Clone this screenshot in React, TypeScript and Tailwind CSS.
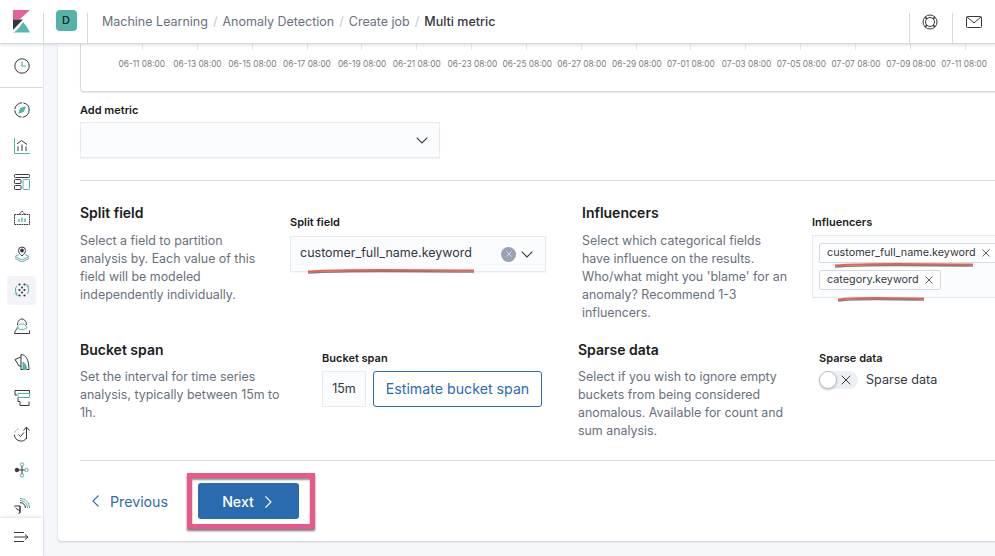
import React from "react";

const T = "#54b3a8";
const D = "#343741";

function Ic({ children }: { children: React.ReactNode }) {
  return (
    <svg width="16" height="16" viewBox="0 0 16 16" fill="none" stroke={D} strokeWidth="1">
      {children}
    </svg>
  );
}

const icons: React.ReactNode[] = [
  <Ic key="compass"><circle cx="8" cy="8" r="7.200" strokeDasharray="10.500 1.200" /><path d="M4.800 11.200L6.500 6.500 11.200 4.800 9.500 9.500z" fill={T} stroke={T} /></Ic>,
  <Ic key="viz"><path d="M.5 0v15.500h15.500" stroke={T} /><path d="M3 6l4.500-3.500L13 6.500" /><path d="M4 13V8.500M8 13V6.500M12 13V8.500" /></Ic>,
  <Ic key="dash"><rect x=".5" y=".5" width="15" height="3" rx=".8" /><rect x=".5" y="5.500" width="6.500" height="4" rx=".8" /><rect x=".5" y="11.500" width="6.500" height="4" rx=".8" /><rect x="9" y="5.500" width="6.500" height="10" rx=".8" stroke={T} /></Ic>,
  <Ic key="canvas"><path d="M.5 4.500h15v10H.5zM5 4.500L8 1l3 3.500" strokeDasharray="1.800 .6" /><path d="M5 12V9M8 12V7.500M11 12V8.500" stroke={T} strokeWidth="1.400" /></Ic>,
  <Ic key="maps"><path d="M8 10C5.800 8 4.500 6.500 4.500 4.500a3.500 3.500 0 017 0C11.500 6.500 10.200 8 8 10z" /><circle cx="8" cy="4.500" r="1.500" fill={D} /><path d="M5 8.500L1 10.500 8 14l7-3.500-4-2M1 12.500L8 16l7-3.500" stroke={T} /></Ic>,
  <Ic key="ml"><g fill={D} stroke="none"><circle cx="5.500" cy="2.500" r="1.100" /><circle cx="10.500" cy="2.500" r="1.100" /><circle cx="5.500" cy="8" r="1.100" /><circle cx="8" cy="5.500" r="1" /><circle cx="8" cy="10.500" r="1" /><circle cx="10.500" cy="8" r="1.100" /><circle cx="5.500" cy="13.500" r="1.100" /><circle cx="10.500" cy="13.500" r="1.100" /></g><path d="M2.800 4C.8 6.500.8 9.500 2.800 12M.8 11.800h2.200v2.200M13.200 12c2-2.500 2-5.500 0-8M15.200 4.200H13V2" stroke={T} /></Ic>,
  <Ic key="infra"><path d="M3.500 7C3.500 3.500 5.500 1 8 1s4.500 2.500 4.500 6" /><path d="M4 9.500C2.500 11 1 13 .5 15.500h15V12.500" /><path d="M3 9.500C4.500 6.500 6 6 8 6s3.500.5 5 3.500c-1.500 1.500-3 2-5 2s-3.500-.5-5-2z" stroke={T} /></Ic>,
  <Ic key="apm"><path d="M7 3L1 5.500l4 6.500h2" /><path d="M7 .5c4.800 0 8 5.500 8 15H7z" /><path d="M9 8c2 1 3.500 3.500 3.500 7.500H9z" fill={T} stroke={T} /></Ic>,
  <Ic key="uptime"><path d="M1 .5h14.500v2.500M1 .5V5h2" /><path d="M4 3.500h11.500v4H4z" stroke={T} /><path d="M4 8v3.500h2v4h9v-4" /></Ic>,
  <Ic key="siem"><path d="M12.500 13V1.500M9.500 4.500l3-3.500 3 3.500" /><path d="M12.500 12a6.500 6.500 0 01-12-3.500" /><path d="M.8 6.500A6.500 6.500 0 015 2.500" stroke={T} strokeDasharray="2 1.200" /><path d="M4.500 8.500l2 2 3.500-4" /></Ic>,
  <Ic key="graph"><circle cx="8" cy="2.500" r="1.700" stroke={T} /><circle cx="3" cy="8" r="1.800" fill={D} /><circle cx="12.500" cy="8" r="1.700" stroke={T} /><circle cx="8" cy="13.500" r="1.700" stroke={T} /><path d="M4.700 8h6M8 4.200v7.600" /></Ic>,
  <Ic key="mon"><path d="M6 8H1.200A4.800 4.800 0 106 13z" /><path d="M6 8V15M1.500 10l4.500 3" /><path d="M6 4.500c3 0 5.500 2.500 5.500 5.500" /><path d="M6 2.500c4.500 0 7.500 3.500 7.500 7.500M6 .5c5.500 0 9.500 4 9.500 9.500" stroke={T} /></Ic>,
];

const ticks = ["06-11","06-13","06-15","06-17","06-19","06-21","06-23","06-25","06-27","06-29","07-01","07-03","07-05","07-07","07-09","07-11"];

function Chevron({ className }: { className?: string }) {
  return (
    <svg className={className} width="12" height="7" viewBox="0 0 12 7" fill="none" stroke="#343741" strokeWidth="1.100">
      <path d="M.7.700L6 6l5.300-5.300" />
    </svg>
  );
}

function X({ size = 8, color = "#343741" }: { size?: number; color?: string }) {
  return (
    <svg width={size} height={size} viewBox="0 0 8 8" fill="none" stroke={color} strokeWidth="0.800">
      <path d="M.5.5l7 7M7.500.5l-7 7" />
    </svg>
  );
}

function Desc({ title, lines, className, textClass }: { title: string; lines: string[]; className: string; textClass: string }) {
  return (
    <div className={className}>
      <h3 className="text-[14px] leading-[18px] font-semibold text-[#1a1c21]">{title}</h3>
      <p className={`${textClass} text-[12.4px] leading-[18px] text-[#69707d]`}>
        {lines.map((l) => (
          <span key={l} className="block whitespace-nowrap">{l}</span>
        ))}
      </p>
    </div>
  );
}

function Label({ children }: { children: React.ReactNode }) {
  return <div className="text-[11px] leading-[14px] font-semibold text-[#1a1c21]">{children}</div>;
}

function Scribble({ width, className }: { width: number; className: string }) {
  const d = `M1 3.500C${width * 0.1} 2.500 ${width * 0.3} 2 ${width * 0.45} 2S${width * 0.8} 2.300 ${width - 1} 2.500`;
  return (
    <svg className={className} width={width} height="7" viewBox={`0 0 ${width} 7`} fill="none">
      <path d={d} stroke="#555" strokeWidth="1.600" transform="translate(0 1.500)" opacity=".75" />
      <path d={d} stroke="#e8604f" strokeWidth="1.800" />
    </svg>
  );
}

export default function App() {
  return (
    <div className="w-[995px] h-[556px] overflow-hidden flex flex-col bg-[#f5f7fa] font-['Inter','Noto_Sans',sans-serif] text-[#343741]">
      <header className="h-[44px] shrink-0 bg-white flex items-stretch border-b border-[#d3dae6] shadow-[0_1px_3px_rgba(152,162,179,0.35)] relative z-10">
        <div className="w-[43px] flex items-center justify-center pb-[1px]">
          <svg width="17" height="23" viewBox="0 0 17 23">
            <path d="M0 0h17L6.500 9.500H0z" fill="#e8609a" />
            <path d="M0 9.500h10L0 20z" fill="#343741" />
            <path d="M10 12c2 2 5 6.500 7 10.500H0c3-.5 7-6 10-10.500z" fill="#54b9ad" />
          </svg>
        </div>
        <div className="w-[44px] border-l border-[#d3dae6] h-[30px] self-end flex justify-center pl-[1px]">
          <div className="w-[21px] h-[21px] rounded-[4px] bg-[#54b3a8] flex items-center justify-center text-[11px] font-medium text-[#1a1c21] -mt-[3px]">D</div>
        </div>
        <nav className="flex-1 border-l border-[#d3dae6] h-[30px] self-end pl-[14px] text-[12.500px] leading-[16px] text-[#69707d]">
          <div className="flex items-center gap-[5px] mt-[1px] h-[16px]">
            <span>Machine Learning</span>
            <span className="text-[#c2c8d2]">/</span>
            <span>Anomaly Detection</span>
            <span className="text-[#c2c8d2]">/</span>
            <span>Create job</span>
            <span className="text-[#c2c8d2]">/</span>
            <span className="font-medium text-[#343741]">Multi metric</span>
          </div>
        </nav>
        <div className="w-[43px] border-l border-[#d3dae6] h-[30px] self-end flex justify-center pr-[2px]">
          <svg className="mt-px" width="16" height="16" viewBox="0 0 16 16" fill="none" stroke="#343741" strokeWidth="1">
            <circle cx="8" cy="8" r="7" />
            <circle cx="8" cy="8" r="4.500" />
            <path d="M3 3l2 2M13 3l-2 2M3 13l2-2M13 13l-2-2" strokeWidth="1.500" />
          </svg>
        </div>
        <div className="w-[43px] border-l border-[#d3dae6] h-[30px] self-end flex justify-center">
          <svg className="mt-px" width="16" height="16" viewBox="0 0 16 16" fill="none" stroke="#343741" strokeWidth="1">
            <rect x=".5" y="2.500" width="15" height="11" rx="1" />
            <path d="M1 3l7 6 7-6" />
          </svg>
        </div>
      </header>

      <div className="flex-1 flex min-h-0">
        <aside className="w-[44px] shrink-0 bg-white flex flex-col border-r border-[#e4e8f0]">
          <div className="h-[44px] shrink-0 flex items-center justify-center border-b border-[#d3dae6]">
            <Ic>
              <circle cx="8" cy="8" r="7.200" />
              <path d="M8 3.500V8h4" stroke={T} strokeWidth="1.200" />
            </Ic>
          </div>
          <div className="flex-1 min-h-0 overflow-hidden pt-[4px]">
            {icons.map((ic, i) => (
              <div key={i} className="h-[36px] flex items-center justify-center">
                <div className={`w-[29px] h-[29px] rounded-[4px] flex items-center justify-center ${i === 5 ? "bg-[#f2f4f8]" : ""}`}>{ic}</div>
              </div>
            ))}
          </div>
          <div className="h-[38px] shrink-0 bg-white flex items-center justify-center shadow-[0_-1px_3px_rgba(152,162,179,0.3)] relative">
            <svg width="15" height="12" viewBox="0 0 15 12" fill="none" stroke="#343741" strokeWidth="1">
              <path d="M0 1.500h10M0 6h14M0 10.500h10M11 3.500L14 6l-3 2.500" />
            </svg>
          </div>
        </aside>

        <div className="w-[14px] shrink-0" />

        <main className="flex-1 min-w-0 h-[497px] bg-white rounded-bl-[4px] shadow-[0_1px_2px_rgba(152,162,179,0.5)] pl-[22px] overflow-hidden">
          <div className="h-[48px] border-l border-b border-[#d3dae6] rounded-bl-[4px] shadow-[0_1px_1px_rgba(152,162,179,0.25)] flex pl-[61px]">
            {ticks.map((t) => (
              <div key={t} className="w-[54.85px] shrink-0 relative">
                <div className="w-px h-[6px] bg-[#e0e4ec]" />
                <span className="absolute top-[14px] -left-[23.500px] whitespace-nowrap text-[8.300px] leading-[12px] text-[#7b7b80]">{t} 08:00</span>
              </div>
            ))}
          </div>

          <div className="mt-[11px]">
            <Label>Add metric</Label>
          </div>
          <div className="mt-[5px] w-[360px] h-[36px] bg-[#fbfcfd] border border-[#e6eaf1] shadow-[0_1px_1px_rgba(152,162,179,0.1)] flex items-center justify-end pr-[11px]">
            <Chevron />
          </div>

          <div className="mt-[22px] h-px bg-[#d3dae6]" />

          <div className="mt-[23px] flex h-[111px]">
            <Desc
              className="w-[210px] shrink-0"
              textClass="mt-[10px]"
              title="Split field"
              lines={["Select a field to partition", "analysis by. Each value of this", "field will be modeled", "independently individually."]}
            />
            <div className="w-[256px] shrink-0 pt-[11px]">
              <Label>Split field</Label>
              <div className="relative mt-[7px] h-[36px] bg-[#fbfcfd] border border-[#e6eaf1] shadow-[0_1px_1px_rgba(152,162,179,0.1)] flex items-center pl-[9px] pr-[12px]">
                <span className="text-[12.500px] text-[#343741] -mt-[1px]">customer_full_name.keyword</span>
                <span className="ml-auto w-[15px] h-[15px] rounded-full bg-[#98a2b3] flex items-center justify-center mr-[5px]">
                  <X size={6} color="#fff" />
                </span>
                <Chevron />
                <Scribble width={168} className="absolute left-[16px] top-[31px]" />
              </div>
            </div>
            <Desc
              className="ml-[36px] w-[230px] shrink-0"
              textClass="mt-[10px]"
              title="Influencers"
              lines={["Select which categorical fields", "have influence on the results.", "Who/what might you 'blame' for an", "anomaly? Recommend 1-3", "influencers."]}
            />
            <div className="w-[200px] shrink-0 pt-[11px]">
              <Label>Influencers</Label>
              <div className="relative mt-[6px] h-[63px] bg-[#fbfcfd] border border-[#e6eaf1] pl-[6px] pt-[7px] flex flex-col items-start gap-[7px]">
                <span className="h-[20px] px-[7px] bg-white border border-[#d3dae6] rounded-[2px] flex items-center gap-[6px] text-[10.800px] text-[#343741] whitespace-nowrap">
                  customer_full_name.keyword <X size={8} />
                </span>
                <span className="h-[20px] px-[7px] bg-white border border-[#d3dae6] rounded-[2px] flex items-center gap-[6px] text-[10.800px] text-[#343741] whitespace-nowrap">
                  category.keyword <X size={8} />
                </span>
                <Scribble width={140} className="absolute left-[21px] top-[26px]" />
                <Scribble width={88} className="absolute left-[24px] top-[60px]" />
              </div>
            </div>
          </div>

          <div className="mt-[26px] flex h-[92px]">
            <Desc
              className="w-[242px] shrink-0"
              textClass="mt-[9px]"
              title="Bucket span"
              lines={["Set the interval for time series", "analysis, typically between 15m to", "1h."]}
            />
            <div className="w-[220px] shrink-0 pt-[10px]">
              <Label>Bucket span</Label>
              <div className="mt-[6px] flex gap-[7px]">
                <div className="w-[44px] h-[36px] bg-[#fbfcfd] border border-[#e6eaf1] flex items-center justify-center text-[12.500px] text-[#343741]">15m</div>
                <button className="w-[169px] h-[36px] border border-[#2b6cb0] rounded-[3px] bg-white text-[#2b6cb0] text-[14.200px]">Estimate bucket span</button>
              </div>
            </div>
            <Desc
              className="ml-[36px] w-[241px] shrink-0"
              textClass="mt-[9px]"
              title="Sparse data"
              lines={["Select if you wish to ignore empty", "buckets from being considered", "anomalous. Available for count and", "sum analysis."]}
            />
            <div className="w-[170px] shrink-0 pt-[10px]">
              <Label>Sparse data</Label>
              <div className="mt-[6px] flex items-center gap-[8px] text-[12.600px] text-[#343741]">
                <div className="relative w-[39px] h-[18px] rounded-full bg-[#eceff4] flex items-center justify-end pr-[7px]">
                  <span className="absolute left-0 top-0 w-[18px] h-[18px] rounded-full bg-white border border-[#b9c0cc] shadow-[0_1px_2px_rgba(100,110,130,0.4)]" />
                  <X size={10} />
                </div>
                <span>Sparse data</span>
              </div>
            </div>
          </div>

          <div className="mt-[27px] h-px bg-[#d3dae6]" />

          <div className="mt-[12px] flex items-center">
            <button className="w-[107px] flex items-center pl-[12px] pt-[1px] gap-[11px] text-[#2b6cb0] text-[14.200px]">
              <svg width="7" height="12" viewBox="0 0 7 12" fill="none" stroke="#2b6cb0" strokeWidth="1.100"><path d="M6.500.5L1 6l5.500 5.500" /></svg>
              Previous
            </button>
            <div className="w-[128px] h-[56px] border-[5px] border-[#e8588c] shadow-[0_2px_2px_rgba(50,50,50,0.65),inset_0_2px_2px_rgba(50,50,50,0.55)] flex items-center pl-[6px]">
              <button className="w-[101px] h-[36px] rounded-[3px] bg-[#2a6bb0] text-white text-[14.200px] font-medium flex items-center justify-center gap-[11px] pr-[3px] pt-[1px]">
                Next
                <svg width="7" height="12" viewBox="0 0 7 12" fill="none" stroke="#fff" strokeWidth="1.100"><path d="M.5.500L6 6 .5 11.500" /></svg>
              </button>
            </div>
          </div>
        </main>
      </div>
    </div>
  );
}
